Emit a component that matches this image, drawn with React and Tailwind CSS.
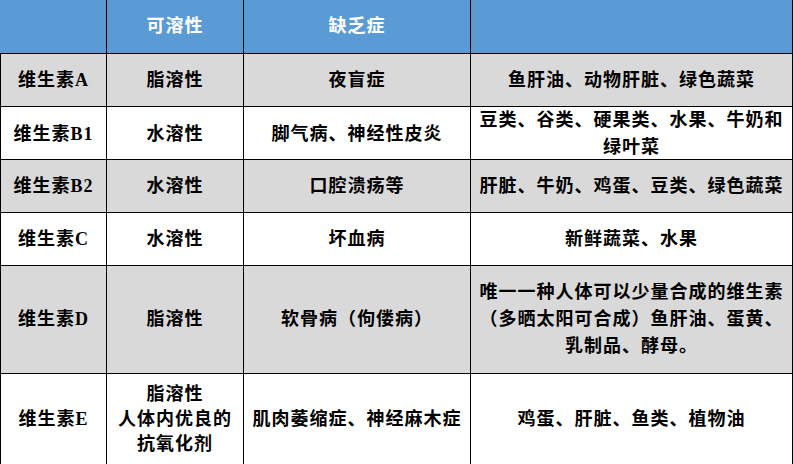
import React from "react";

const font = { fontFamily: '"Liberation Serif", "Noto Sans CJK SC", serif' };

function Cell({ children, first, className = "" }) {
  return (
    <div
      className={`flex items-center justify-center text-center border-r border-black whitespace-nowrap ${first ? "border-l" : ""} ${className}`}
    >
      {children}
    </div>
  );
}

function Row({ h, bg, cells, last }) {
  return (
    <div
      className={`grid grid-cols-[107px_137px_227px_322px] ${last ? "" : "border-b"} border-black ${bg} ${h}`}
    >
      {cells.map((c, i) => (
        <Cell key={i} first={i === 0}>
          <div>{c}</div>
        </Cell>
      ))}
    </div>
  );
}

export default function App() {
  const gray = "bg-[#d9d9d9]";
  const white = "bg-white";
  return (
    <div
      className="w-[793px] h-[464px] overflow-hidden bg-white text-black font-bold text-[18px] tracking-[1px] leading-[27px]"
      style={font}
    >
      <div className="grid grid-cols-[107px_137px_227px_322px] h-[54px] border-b border-black bg-[#5b9bd5] text-white">
        <div className="border-r border-black"></div>
        <div className="flex items-center justify-center border-r border-black">可溶性</div>
        <div className="flex items-center justify-center border-r border-black">缺乏症</div>
        <div className="border-r border-black"></div>
      </div>
      <Row h="h-[53px]" bg={gray} cells={["维生素A", "脂溶性", "夜盲症", "鱼肝油、动物肝脏、绿色蔬菜"]} />
      <Row
        h="h-[53px]"
        bg={white}
        cells={[
          "维生素B1",
          "水溶性",
          "脚气病、神经性皮炎",
          <>
            豆类、谷类、硬果类、水果、牛奶和
            <br />
            绿叶菜
          </>,
        ]}
      />
      <Row h="h-[53px]" bg={gray} cells={["维生素B2", "水溶性", "口腔溃疡等", "肝脏、牛奶、鸡蛋、豆类、绿色蔬菜"]} />
      <Row h="h-[53px]" bg={white} cells={["维生素C", "水溶性", "坏血病", "新鲜蔬菜、水果"]} />
      <Row
        h="h-[108px]"
        bg={gray}
        cells={[
          "维生素D",
          "脂溶性",
          "软骨病（佝偻病）",
          <>
            唯一一种人体可以少量合成的维生素
            <br />
            （多晒太阳可合成）鱼肝油、蛋黄、
            <br />
            乳制品、酵母。
          </>,
        ]}
      />
      <Row
        h="h-[91px]"
        bg={white}
        last
        cells={[
          "维生素E",
          <span className="block leading-[25px]">
            脂溶性
            <br />
            人体内优良的
            <br />
            抗氧化剂
          </span>,
          "肌肉萎缩症、神经麻木症",
          "鸡蛋、肝脏、鱼类、植物油",
        ]}
      />
    </div>
  );
}
